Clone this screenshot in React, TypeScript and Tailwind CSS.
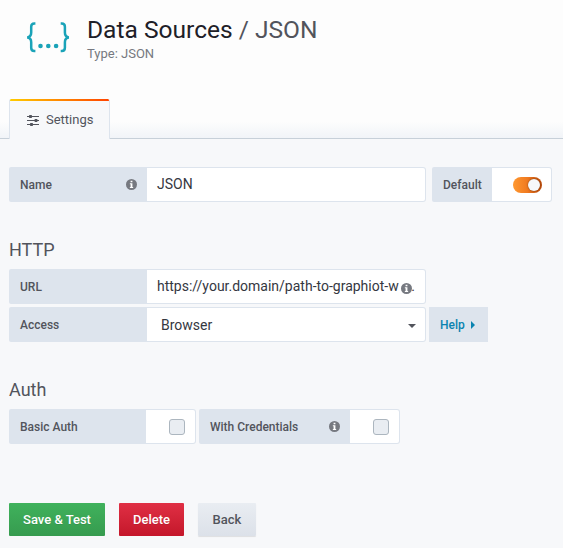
import type { ReactNode } from 'react';

function InfoIcon({ className = '' }: { className?: string }) {
  return (
    <svg viewBox="0 0 12 12" className={`h-[11px] w-[11px] shrink-0 ${className}`}>
      <circle cx="6" cy="6" r="6" fill="#767980" />
      <path d="M5 1.8h2v1.7H5zM4.2 4.6H7v4h.8v1.2H4.2V8.6H5V5.8h-.8z" fill="#fff" />
    </svg>
  );
}

function SlidersIcon() {
  return (
    <svg viewBox="0 0 12 11" className="h-[11px] w-3 shrink-0" fill="#52545c">
      <path d="M0 1h12v1H0zM0 5h12v1H0zM0 9h12v1H0z" />
      <rect x="2" y="0" width="3" height="3" rx="0.7" />
      <rect x="7.5" y="4" width="3" height="3" rx="0.7" />
      <rect x="3" y="8" width="3" height="3" rx="0.7" />
    </svg>
  );
}

function JsonLogo() {
  return (
    <svg viewBox="0 0 44 32" className="h-8 w-11 shrink-0" fill="none" stroke="#1aa3b8" strokeWidth="2.5">
      <path d="M9.4 2.5H8.3C6 2.500 5.200 3.600 5.200 5.800v5.800c0 2.800-1 4.500-4 4.800 3 .3 4 2 4 4.800v5.600c0 2.200.8 3.300 3.100 3.300h1.100" />
      <path d="M34.700 2.500h1.100c2.300 0 3.100 1.100 3.100 3.300v5.800c0 2.800 1 4.500 4 4.800-3 .3-4 2-4 4.800v5.600c0 2.200-.8 3.300-3.100 3.300h-1.100" />
      <g fill="#1aa3b8" stroke="none">
        <circle cx="14.5" cy="25" r="2.300" />
        <circle cx="22.3" cy="25" r="2.300" />
        <circle cx="30.1" cy="25" r="2.300" />
      </g>
    </svg>
  );
}

function Label({ children, info = false, className }: { children: ReactNode; info?: boolean; className: string }) {
  return (
    <label className={`flex h-[35px] shrink-0 items-center justify-between rounded-l-[2px] bg-[#dde4ed] pl-[11px] pr-[10px] text-[12px] font-medium text-[#52545c] ${className}`}>
      <span>{children}</span>
      {info && <InfoIcon />}
    </label>
  );
}

const box = 'flex h-[35px] shrink-0 items-center rounded-r-[3px] border border-l-0 border-[#dde4ed] bg-white text-[14px] text-[#35373f]';

function Checkbox() {
  return <span className="h-4 w-4 rounded-[3px] border border-[#acb6bf] bg-[#e9edf2]" />;
}

export default function App() {
  return (
    <div className="flex h-[548px] w-[563px] flex-col overflow-hidden bg-[#f7f8fa] font-['Roboto',sans-serif]">
      <header className="flex h-[139px] shrink-0 flex-col justify-between border-b border-[#c7d0d9] bg-[linear-gradient(180deg,#fdfdfd_88%,#f1f4f8)]">
        <div className="flex pl-[26px] pt-[15px]">
          <div className="pt-[6px]"><JsonLogo /></div>
          <div className="pl-[17px]">
            <h1 className="text-[24.55px] leading-[30px] text-[#1e2028]">
              Data Sources <span className="text-[#52545c]">/ JSON</span>
            </h1>
            <div className="text-[13px] leading-[17px] text-[#767980]">Type: JSON</div>
          </div>
        </div>
        <div className="-mb-px ml-[9px] flex h-10 w-[101px] flex-col overflow-hidden rounded-t-[2px] border-x border-[#dde4ed] bg-[#f7f8fa]">
          <div className="h-[2px] shrink-0 bg-[linear-gradient(90deg,#ffcc00,#ff8800_50%,#ff4400)]" />
          <div className="flex flex-1 items-center pl-[17px] text-[13px] text-[#52545c]">
            <SlidersIcon />
            <span className="ml-[7px]">Settings</span>
          </div>
        </div>
      </header>

      <main className="pl-[9px] pt-[28px]">
        <div className="flex">
          <Label className="w-[138px]" info>Name</Label>
          <div className={`${box} w-[279px] pl-[10px]`}>JSON</div>
          <Label className="ml-[6px] w-[60px]">Default</Label>
          <div className={`${box} w-[60px] justify-end pr-[9px]`}>
            <span className="flex h-4 w-[29px] items-center justify-end rounded-full bg-[linear-gradient(90deg,#ff9830,#f07a20_50%,#bd4b0b)] pr-[2px]">
              <span className="h-[12px] w-[12px] rounded-full bg-[#f7f8fa] shadow-[0_0_2px_#00000080]" />
            </span>
          </div>
        </div>

        <h3 className="mt-[36px] h-[31px] text-[18px] leading-[24px] text-[#52545c]">HTTP</h3>
        <div className="flex">
          <Label className="w-[138px]">URL</Label>
          <div className={`${box} relative w-[279px] pl-[10px]`}>
            <span>https://your.domain/path-to-graphiot-w</span>
            <span className="absolute right-[10px]">.</span>
            <InfoIcon className="absolute right-[13px] top-[13px]" />
          </div>
        </div>
        <div className="mt-[3px] flex">
          <Label className="w-[138px]">Access</Label>
          <div className={`${box} w-[279px] justify-between pl-[14px] pr-[9px] pt-[2px]`}>
            <span>Browser</span>
            <svg viewBox="0 0 8 4" className="h-1 w-2" fill="#52545c"><path d="M0 0h8L4 4z" /></svg>
          </div>
          <button className="ml-[3px] flex h-[35px] w-[59px] items-center bg-[#dde4ed] pl-[11px] text-[12px] font-medium text-[#0a83b0]">
            Help
            <svg viewBox="0 0 4 8" className="ml-[6px] h-2 w-1" fill="currentColor"><path d="M0 0v8l4-4z" /></svg>
          </button>
        </div>

        <h3 className="mt-[36px] h-[31px] text-[18px] leading-[24px] text-[#52545c]">Auth</h3>
        <div className="flex">
          <Label className="w-[137px]">Basic Auth</Label>
          <div className={`${box} w-[50px] justify-end pr-[10px]`}><Checkbox /></div>
          <Label className="ml-[3px] w-[151px] pr-[9px]" info>With Credentials</Label>
          <div className={`${box} w-[50px] justify-end pr-[10px]`}><Checkbox /></div>
        </div>

        <div className="mt-[59px] flex gap-[14px] text-[13px] font-medium text-white">
          <button className="h-[33px] w-[96px] rounded-[1px] bg-linear-to-b from-[#40b25c] to-[#369b4f] [text-shadow:0_1px_0_#0000001a]">Save &amp; Test</button>
          <button className="h-[33px] w-[65px] rounded-[1px] bg-linear-to-b from-[#e02f44] to-[#c4162a] [text-shadow:0_1px_0_#0000001a]">Delete</button>
          <button className="h-[33px] w-[58px] rounded-[1px] bg-linear-to-b from-[#e9edf2] to-[#dce1e9] text-[#52545c] shadow-[0_1px_1px_#0000001a] [text-shadow:0_1px_0_#ffffff1a]">Back</button>
        </div>
      </main>
    </div>
  );
}
